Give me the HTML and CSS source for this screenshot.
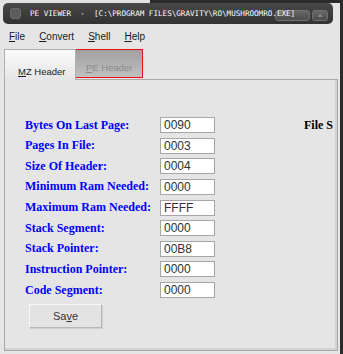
FILE: index.html
```html
<!DOCTYPE html>
<html lang="en">
<head>
    <meta charset="UTF-8">
    <title>PE Viewer</title>
    <link rel="stylesheet" href="styles.css">
</head>
<body>
<div class="window">
    <div class="topstrip"></div>
    <div class="titlebar">
        <div class="sysbtn"></div>
        <div class="title">PE VIEWER&nbsp;&nbsp;-&nbsp;&nbsp;[C:\PROGRAM FILES\GRAVITY\RO\MUSHROOMRO.EXE]</div>
        <div class="winbtn minbtn"></div>
        <div class="winbtn closebtn">×</div>
    </div>
    <div class="menubar">
        <span><u>F</u>ile</span>
        <span><u>C</u>onvert</span>
        <span><u>S</u>hell</span>
        <span><u>H</u>elp</span>
    </div>
    <div class="tabs">
        <div class="tab active"><u>M</u>Z Header</div>
        <div class="tab pe"><u>P</u>E Header</div>
    </div>
    <div class="panel">
        <div class="form">
            <div class="row">
                <label>Bytes On Last Page:</label>
                <input type="text" value="0090">
                <span class="side">File S</span>
            </div>
            <div class="row">
                <label>Pages In File:</label>
                <input type="text" value="0003">
            </div>
            <div class="row">
                <label>Size Of Header:</label>
                <input type="text" value="0004">
            </div>
            <div class="row">
                <label>Minimum Ram Needed:</label>
                <input type="text" value="0000">
            </div>
            <div class="row">
                <label>Maximum Ram Needed:</label>
                <input type="text" value="FFFF">
            </div>
            <div class="row">
                <label>Stack Segment:</label>
                <input type="text" value="0000">
            </div>
            <div class="row">
                <label>Stack Pointer:</label>
                <input type="text" value="00B8">
            </div>
            <div class="row">
                <label>Instruction Pointer:</label>
                <input type="text" value="0000">
            </div>
            <div class="row">
                <label>Code Segment:</label>
                <input type="text" value="0000">
            </div>
        </div>
        <button class="save">Sa<u>v</u>e</button>
    </div>
</div>
<div class="edge"></div>
</body>
</html>
```
FILE: styles.css
```css
body {
    margin: 0;
    width: 343px;
    height: 354px;
    overflow: hidden;
    display: flex;
    background-color: #e5e5e5;
    font-family: "Liberation Sans", Arial, sans-serif;
}
.window {
    width: 340px;
    display: flex;
    flex-direction: column;
}
.edge {
    width: 3px;
    background-color: #2b2b2b;
}
.topstrip {
    height: 3px;
    background: linear-gradient(to right, #e2e2e2 150px, #2b2b2b 150px);
}
.titlebar {
    position: relative;
    margin-left: 3px;
    width: 330px;
    height: 21px;
    box-sizing: border-box;
    padding-left: 7px;
    display: flex;
    align-items: center;
    border-radius: 5px;
    background: linear-gradient(#484848, #323232);
}
.sysbtn {
    width: 11px;
    height: 11px;
    box-sizing: border-box;
    border-radius: 3px;
    background-color: #5c5c5c;
    border: 1px solid #6c6c6c;
    margin-right: 9px;
}
.title {
    position: relative;
    z-index: 1;
    color: #ffffff;
    font-family: "DejaVu Sans Mono", monospace;
    font-size: 7.6px;
    white-space: nowrap;
}
.winbtn {
    position: absolute;
    top: 7px;
    height: 11px;
    box-sizing: border-box;
    border-radius: 3px;
    border: 1px solid #707070;
    background: linear-gradient(#686868, #4c4c4c);
    color: #a8a8a8;
    font-size: 8px;
    line-height: 9px;
    text-align: center;
}
.minbtn {
    left: 272px;
    width: 35px;
}
.closebtn {
    left: 309px;
    width: 16px;
}
.menubar {
    height: 25px;
    padding-left: 9px;
    display: flex;
    align-items: center;
    gap: 14px;
    font-size: 10px;
    color: #1a1a1a;
}
.tabs {
    height: 30px;
    padding-left: 4px;
    display: flex;
    align-items: flex-end;
    font-size: 9.5px;
}
.tab {
    box-sizing: border-box;
    line-height: 12px;
    white-space: nowrap;
}
.tab.active {
    position: relative;
    z-index: 1;
    width: 72px;
    height: 31px;
    margin-bottom: -1px;
    padding: 16px 0 0 13px;
    border: 1px solid #b0b0b0;
    border-bottom: none;
    background: linear-gradient(#fbfbfb, #e5e5e5);
    color: #1a1a1a;
}
.tab.pe {
    width: 68px;
    height: 29px;
    margin-left: -1px;
    margin-bottom: 1px;
    padding: 12px 0 0 10px;
    border: 1px solid #e81010;
    background: linear-gradient(#a0a0a0, #c0c0c0);
    color: #8a8a8a;
}
.panel {
    margin-left: 4px;
    width: 334px;
    height: 272px;
    box-sizing: border-box;
    padding: 37px 0 0 20px;
    border: 1px solid #a9a9a9;
    box-shadow: inset -2px -2px 0 #d2d2d2;
}
.form {
    width: 308px;
    display: flex;
    flex-direction: column;
    gap: 4.625px;
}
.row {
    height: 16px;
    display: flex;
    align-items: center;
    white-space: nowrap;
}
.row label {
    width: 135px;
    flex-shrink: 0;
    font-family: "Liberation Serif", "Times New Roman", serif;
    font-weight: bold;
    font-size: 12px;
    color: #0000ff;
}
.row input {
    width: 55px;
    height: 16px;
    flex-shrink: 0;
    box-sizing: border-box;
    margin: 0;
    padding: 0 0 0 3px;
    border: 1px solid #a6a6a6;
    background-color: #ffffff;
    font-family: "Liberation Sans", Arial, sans-serif;
    font-size: 12px;
    color: #303030;
    outline: none;
}
.side {
    margin-left: 89px;
    font-family: "Liberation Serif", "Times New Roman", serif;
    font-weight: bold;
    font-size: 12px;
    color: #000000;
}
.save {
    margin: 6px 0 0 4px;
    width: 73px;
    height: 24px;
    padding: 0;
    border: 1px solid;
    border-color: #f6f6f6 #b8b8b8 #b8b8b8 #f6f6f6;
    box-shadow: 1px 1px 0 #cfcfcf;
    background-color: #e3e3e3;
    font-family: "Liberation Sans", Arial, sans-serif;
    font-size: 11px;
    color: #333333;
}
```
